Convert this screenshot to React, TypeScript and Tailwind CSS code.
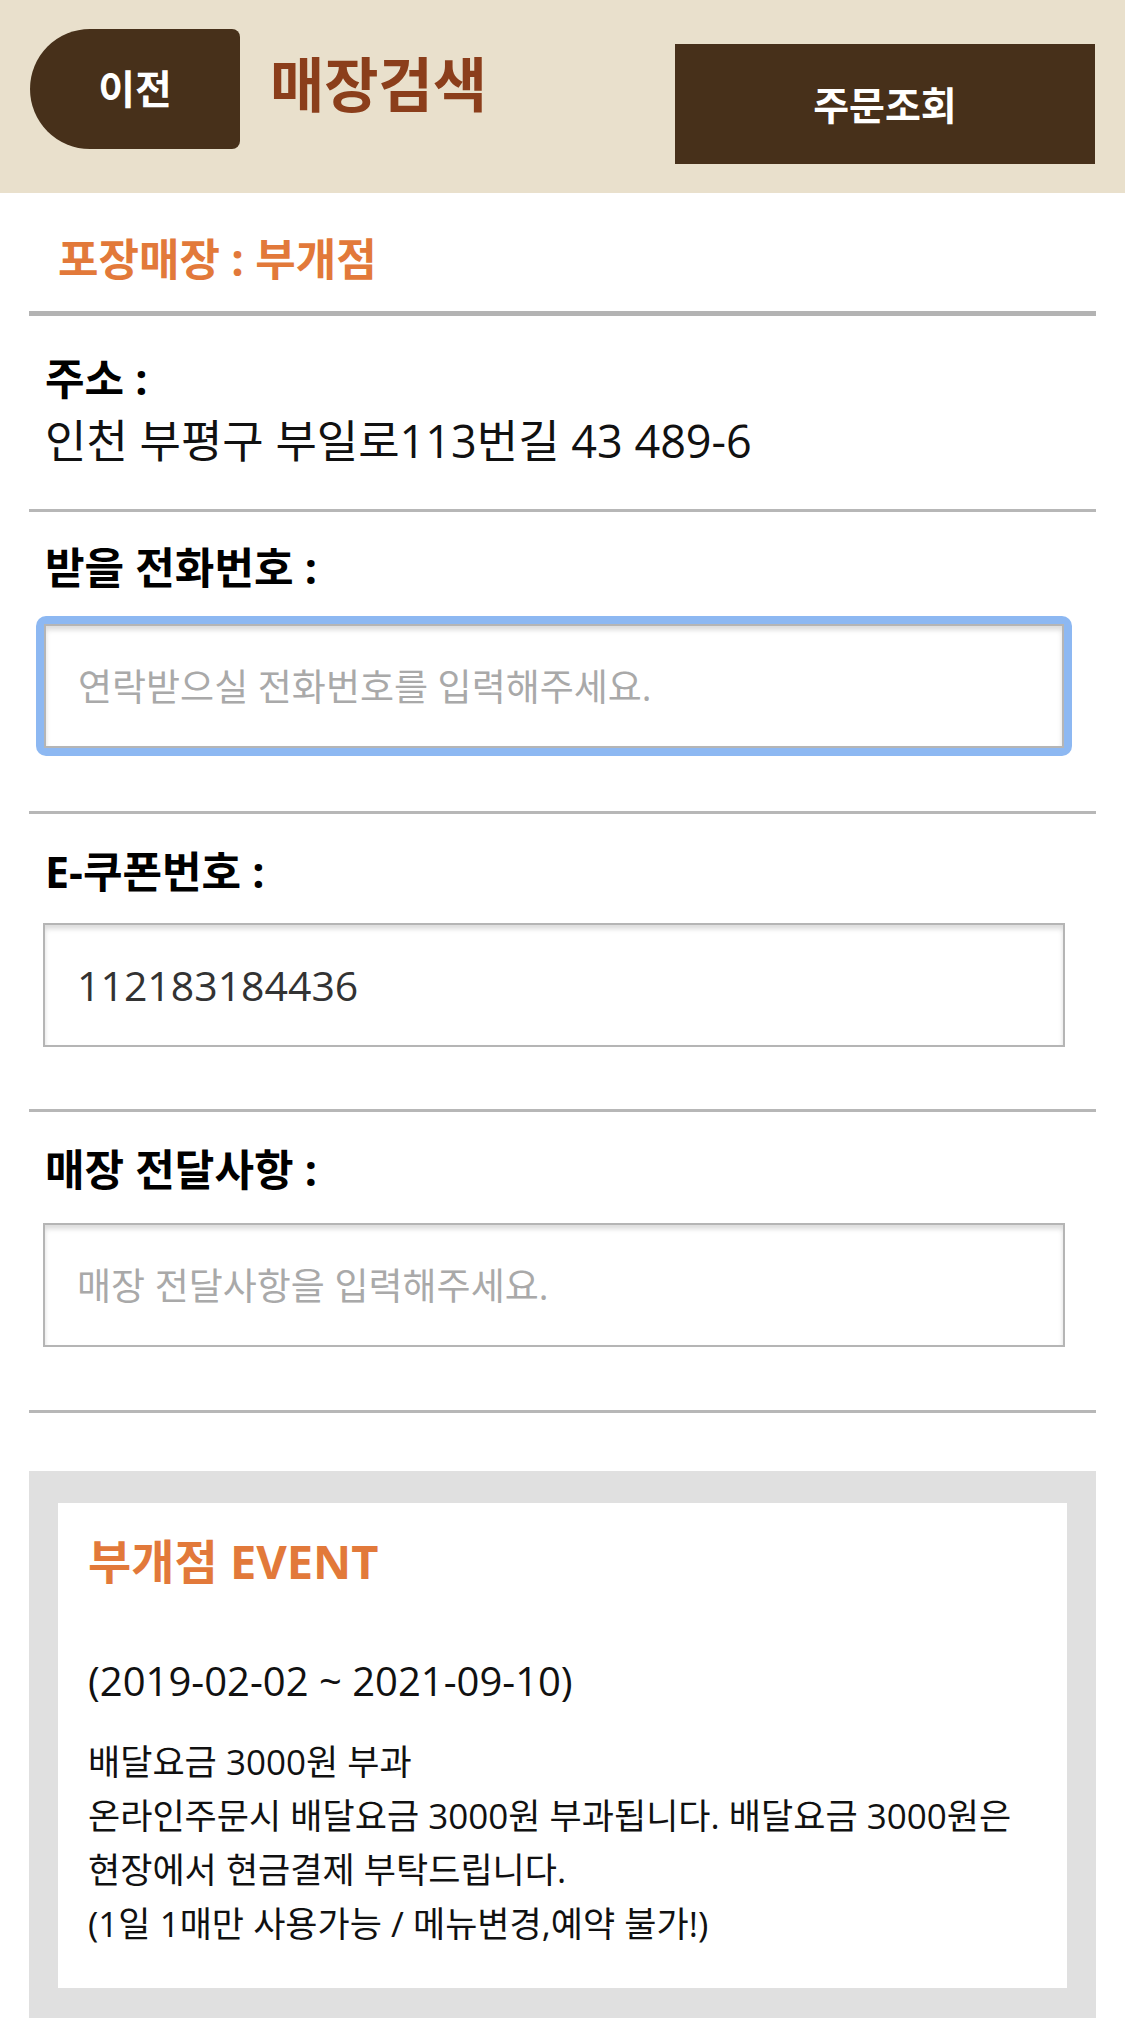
import React from 'react';

const FONT = { fontFamily: '"Open Sans", "Noto Sans CJK KR", sans-serif' };

const Divider = ({ className = '' }: { className?: string }) => (
    <div className={`h-[3px] bg-[#b7b7b7] ${className}`} />
);

const Label = ({ children, className = '' }: { children: React.ReactNode; className?: string }) => (
    <div className={`pl-[16px] text-[43px] font-bold leading-none text-black ${className}`}>{children}</div>
);

const TextField = ({ placeholder, value, size }: { placeholder?: string; value?: string; size: string }) => (
    <input
        readOnly
        placeholder={placeholder}
        defaultValue={value}
        className={`block h-[124px] w-full border-2 border-[#b5b5b5] bg-white pl-[32px] text-[#333] shadow-[inset_0_4px_5px_rgba(0,0,0,0.14)] outline-none placeholder:text-[#a9a9a9] ${size}`}
    />
);

export default function App() {
    return (
        <div className="min-h-[2035px] w-[1125px] bg-white" style={FONT}>
            {/* header */}
            <div className="flex h-[193px] items-start bg-[#e9e0cc] px-[30px]">
                <button className="mt-[29px] flex h-[120px] w-[210px] items-center justify-center rounded-l-[60px] rounded-r-[8px] bg-[#47301a] text-[40px] font-bold leading-none text-white">
                    이전
                </button>
                <h1 className="ml-[30px] mt-[55px] text-[59px] font-bold leading-none text-[#8b3e1b]">매장검색</h1>
                <button className="ml-auto mt-[44px] flex h-[120px] w-[420px] items-center justify-center bg-[#47301a] text-[39px] font-bold leading-none text-white">
                    주문조회
                </button>
            </div>

            <div className="px-[29px]">
                <div className="mt-[44px] pl-[29px] text-[44px] font-bold leading-none text-[#e2793a]">포장매장 : 부개점</div>
                <div className="mt-[30px] h-[5px] bg-[#b3b3b3]" />

                {/* address */}
                <Label className="mt-[41px]">주소 :</Label>
                <div className="mt-[18px] pl-[16px] text-[45px] leading-none text-[#111]">인천 부평구 부일로113번길 43 489-6</div>
                <Divider className="mt-[46px]" />

                {/* phone */}
                <Label className="mt-[34px]">받을 전화번호 :</Label>
                <div className="ml-[7px] mt-[27px] w-[1036px] rounded-[10px] bg-[#8db8f2] p-[8px]">
                    <TextField size="text-[37px]" placeholder="연락받으실 전화번호를 입력해주세요." />
                </div>
                <Divider className="mt-[55px]" />

                {/* coupon */}
                <Label className="mt-[36px]">E-쿠폰번호 :</Label>
                <div className="ml-[14px] mt-[30px] w-[1022px]">
                    <TextField size="text-[41px]" value="112183184436" />
                </div>
                <Divider className="mt-[62px]" />

                {/* memo */}
                <Label className="mt-[36px]">매장 전달사항 :</Label>
                <div className="ml-[14px] mt-[32px] w-[1022px]">
                    <TextField size="text-[37px]" placeholder="매장 전달사항을 입력해주세요." />
                </div>
                <Divider className="mt-[63px]" />

                {/* event */}
                <div className="mt-[58px] bg-[#e0e0e0] px-[29px] pb-[30px] pt-[32px]">
                    <div className="bg-white px-[30px] pb-[37px] pt-[35px]">
                        <div className="text-[47px] font-bold leading-none text-[#e2793a]">부개점 EVENT</div>
                        <div className="mt-[76px] text-[40px] leading-none text-[#111]">(2019-02-02 ~ 2021-09-10)</div>
                        <div className="mt-[34px] whitespace-nowrap text-[35px] leading-[54px] text-[#111]">
                            <div>배달요금 3000원 부과</div>
                            <div>온라인주문시 배달요금 3000원 부과됩니다. 배달요금 3000원은</div>
                            <div>현장에서 현금결제 부탁드립니다.</div>
                            <div>(1일 1매만 사용가능 / 메뉴변경,예약 불가!)</div>
                        </div>
                    </div>
                </div>
            </div>
        </div>
    );
}
